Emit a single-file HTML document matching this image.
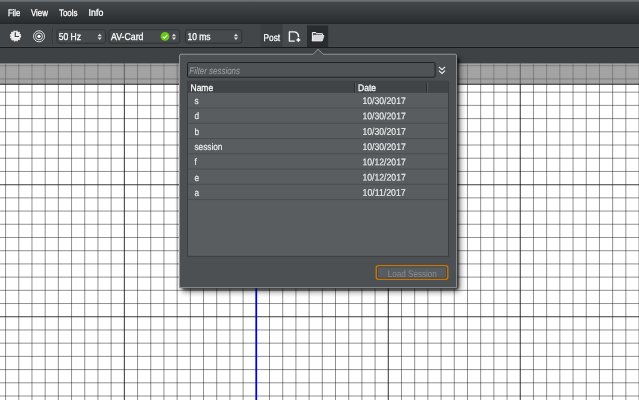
<!DOCTYPE html>
<html><head><meta charset="utf-8"><title>Sessions</title>
<style>
html,body{margin:0;padding:0;}
body{width:639px;height:400px;overflow:hidden;background:#fff;position:relative;font-family:"Liberation Sans",sans-serif;}
svg.bg{position:absolute;left:0;top:0;will-change:transform;opacity:0.999;font-family:"Liberation Sans",sans-serif;}
</style></head><body>
<svg class="bg" width="639" height="400" viewBox="0 0 639 400">
<defs><linearGradient id="mg" x1="0" y1="0" x2="0" y2="1"><stop offset="0" stop-color="#707376"/><stop offset="0.05" stop-color="#686b6e"/><stop offset="0.1" stop-color="#43474a"/><stop offset="0.5" stop-color="#383b3e"/><stop offset="0.93" stop-color="#2b2e31"/><stop offset="1" stop-color="#222528"/></linearGradient><filter id="sh" x="-10%" y="-10%" width="125%" height="125%"><feGaussianBlur stdDeviation="3.4"/></filter><filter id="sh2" x="-10%" y="-10%" width="125%" height="125%"><feGaussianBlur stdDeviation="1.1"/></filter></defs>
<rect x="0" y="63.6" width="639" height="336.4" fill="#ffffff"/>
<path d="M5.58 63.6V400M18.77 63.6V400M31.97 63.6V400M45.17 63.6V400M58.36 63.6V400M71.56 63.6V400M84.76 63.6V400M97.96 63.6V400M111.15 63.6V400M137.55 63.6V400M150.74 63.6V400M163.94 63.6V400M177.14 63.6V400M190.33 63.6V400M203.53 63.6V400M216.73 63.6V400M229.93 63.6V400M243.12 63.6V400M269.52 63.6V400M282.71 63.6V400M295.91 63.6V400M309.11 63.6V400M322.30 63.6V400M335.50 63.6V400M348.70 63.6V400M361.90 63.6V400M375.09 63.6V400M401.49 63.6V400M414.68 63.6V400M427.88 63.6V400M441.08 63.6V400M454.27 63.6V400M467.47 63.6V400M480.67 63.6V400M493.87 63.6V400M507.06 63.6V400M533.46 63.6V400M546.65 63.6V400M559.85 63.6V400M573.05 63.6V400M586.25 63.6V400M599.44 63.6V400M612.64 63.6V400M625.84 63.6V400M639.03 63.6V400" stroke="#000" stroke-opacity="0.51" stroke-width="0.85" fill="none"/>
<path d="M0 65.76H639M0 78.97H639M0 92.18H639M0 105.39H639M0 118.60H639M0 131.81H639M0 145.02H639M0 158.23H639M0 171.44H639M0 197.86H639M0 211.07H639M0 224.28H639M0 237.49H639M0 250.70H639M0 263.91H639M0 277.12H639M0 290.33H639M0 303.54H639M0 329.96H639M0 343.17H639M0 356.38H639M0 369.59H639M0 382.80H639M0 396.01H639" stroke="#000" stroke-opacity="0.51" stroke-width="0.85" fill="none"/>
<path d="M124.35 63.6V400M256.32 63.6V400M388.29 63.6V400M520.26 63.6V400" stroke="#000" stroke-opacity="0.76" stroke-width="1.05" fill="none"/>
<path d="M0 184.65H639M0 316.75H639" stroke="#000" stroke-opacity="0.76" stroke-width="1.05" fill="none"/>
<rect x="0" y="63.6" width="639" height="20.4" fill="#747474" fill-opacity="0.66"/>
<path d="M0 84.15H639" stroke="#161616" stroke-opacity="0.95" stroke-width="1.05" fill="none"/>
<path d="M256.3 184V400" stroke="#0000e6" stroke-width="1.7" fill="none"/>
<rect x="0" y="0" width="639" height="63.6" fill="#3e4245"/>
<rect x="0" y="0" width="639" height="47.2" fill="#424649"/>
<rect x="0" y="45.6" width="639" height="1.5" fill="#484c4f"/>
<rect x="0" y="46.95" width="639" height="1" fill="#17191b"/>
<rect x="0" y="0" width="639" height="24" fill="url(#mg)"/>
<path d="M52.6 28.5Q51.6 36 52.6 44" stroke="#313437" stroke-width="1" fill="none"/><path d="M53.5 28.5Q52.5 36 53.5 44" stroke="#484c4f" stroke-width="0.8" fill="none"/>
<circle cx="15.5" cy="36" r="4.9" fill="#ececec"/><circle cx="15.5" cy="36" r="5.1" fill="none" stroke="#ececec" stroke-width="1.1" stroke-dasharray="1.55 1.12"/>
<path d="M15.3 32.2V36.5H19" stroke="#424649" stroke-width="1.2" fill="none"/>
<circle cx="39" cy="36.3" r="5.5" fill="none" stroke="#ededed" stroke-width="0.9"/><circle cx="39" cy="36.3" r="3.5" fill="none" stroke="#ededed" stroke-width="0.9"/><circle cx="39" cy="36.3" r="1.6" fill="#ffffff"/>
<rect x="56.95" y="29.8" width="48.6" height="13.3" rx="2.2" fill="#464a4d" stroke="#2f3235" stroke-width="1"/><path d="M99.7 33.8L101.8 36.2H97.60000000000001Z M99.7 39.9L101.8 37.4H97.60000000000001Z" fill="#e2e2e2"/>
<rect x="108.95" y="29.8" width="70.85" height="13.3" rx="2.2" fill="#464a4d" stroke="#2f3235" stroke-width="1"/><path d="M173.95 33.8L176.04999999999998 36.2H171.85Z M173.95 39.9L176.04999999999998 37.4H171.85Z" fill="#e2e2e2"/>
<rect x="185.45" y="29.8" width="56.35" height="13.3" rx="2.2" fill="#464a4d" stroke="#2f3235" stroke-width="1"/><path d="M235.95 33.8L238.04999999999998 36.2H233.85Z M235.95 39.9L238.04999999999998 37.4H233.85Z" fill="#e2e2e2"/>
<circle cx="165" cy="36.45" r="4.4" fill="#64c814"/><path d="M162.7 36.6L164.4 38.2L167.4 34.8" stroke="#eef4e8" stroke-width="1.05" fill="none"/>
<rect x="260.5" y="24" width="22.2" height="22.95" fill="#3b3f42"/>
<rect x="282.7" y="24" width="24.3" height="22.95" fill="#464a4d"/>
<rect x="307" y="25.5" width="21.2" height="21.45" fill="#292c2f"/>
<path d="M294.8 41.1H289.4V31.9H294.3Q298.5 32.4 298.5 36.6V37.3" stroke="#f8f8f8" stroke-width="1.4" fill="none" stroke-linejoin="round"/><path d="M298.35 38V41.8M296.45 39.9H300.25" stroke="#fff" stroke-width="1.5" fill="none"/>
<path d="M312.4 40.6V32.5H315.8L316.6 33.7H322.4V35.2" stroke="#f4f4f4" stroke-width="1" fill="#f4f4f4" fill-opacity="0.25"/><path d="M312 41L313.6 35.5H324L322.2 41Z" fill="#d6d6d6" stroke="#f6f6f6" stroke-width="0.7"/>
<rect x="182" y="58" width="277.5" height="233" rx="2" fill="#000" fill-opacity="0.62" filter="url(#sh)"/>
<rect x="182" y="57" width="276.6" height="232.6" rx="2" fill="#000" fill-opacity="0.75" filter="url(#sh2)"/>
<path d="M179.5 56V287.7H456.6V55.8Q456.6 54.2 455 54.2H323L318.1 49.2L313.2 54.2H181Q179.5 54.2 179.5 56Z" fill="#4c5053" stroke="#93969a" stroke-width="1"/>
<rect x="187.5" y="62.5" width="247.6" height="14.7" rx="1.2" fill="#4f5356" stroke="#202325" stroke-width="1"/>
<path d="M438.9 66.8L442 69.7L445.1 66.8M438.9 70.6L442 73.5L445.1 70.6" stroke="#f0f0f0" stroke-width="1.1" fill="none"/>
<rect x="187.5" y="81.3" width="261" height="175" fill="#595d60" stroke="#3b3e41" stroke-width="1"/>
<rect x="188" y="81.8" width="260" height="11" fill="#404447"/>
<path d="M355.6 83V92.5M427.6 83V92.5" stroke="#5d6164" stroke-width="1"/><path d="M354.6 83V92.5M426.6 83V92.5" stroke="#2c2f32" stroke-width="1"/>
<path d="M188 108.05H448" stroke="#4a4e51" stroke-width="1"/>
<path d="M188 123.30H448" stroke="#4a4e51" stroke-width="1"/>
<path d="M188 138.55H448" stroke="#4a4e51" stroke-width="1"/>
<path d="M188 153.80H448" stroke="#4a4e51" stroke-width="1"/>
<path d="M188 169.05H448" stroke="#4a4e51" stroke-width="1"/>
<path d="M188 184.30H448" stroke="#4a4e51" stroke-width="1"/>
<path d="M188 199.55H448" stroke="#4a4e51" stroke-width="1"/>
<rect x="376.3" y="265.65" width="71.45" height="13.7" rx="2.4" fill="#595d60" stroke="#c67503" stroke-width="1.5"/><rect x="377.5" y="266.85" width="69.05" height="11.3" rx="1.3" fill="none" stroke="#3d434a" stroke-width="0.9"/>
<text transform="translate(7.90 15.85) rotate(0.03) scale(0.7970 1)" font-size="9.5" fill="#ffffff" stroke="#ffffff" stroke-width="0.3">File</text>
<text transform="translate(31.00 15.85) rotate(0.03) scale(0.8276 1)" font-size="9.5" fill="#ffffff" stroke="#ffffff" stroke-width="0.3">View</text>
<text transform="translate(59.00 15.85) rotate(0.03) scale(0.8342 1)" font-size="9.5" fill="#ffffff" stroke="#ffffff" stroke-width="0.3">Tools</text>
<text transform="translate(88.60 15.85) rotate(0.03) scale(0.9277 1)" font-size="9.5" fill="#ffffff" stroke="#ffffff" stroke-width="0.3">Info</text>
<text transform="translate(58.70 39.90) rotate(0.03) scale(0.8536 1)" font-size="10" fill="#fafafa" stroke="#fafafa" stroke-width="0.3">50 Hz</text>
<text transform="translate(111.00 39.90) rotate(0.03) scale(0.8772 1)" font-size="10" fill="#fafafa" stroke="#fafafa" stroke-width="0.3">AV-Card</text>
<text transform="translate(187.50 39.90) rotate(0.03) scale(0.8483 1)" font-size="10" fill="#fafafa" stroke="#fafafa" stroke-width="0.3">10 ms</text>
<text transform="translate(263.50 40.80) rotate(0.03) scale(0.8380 1)" font-size="9.9" fill="#fafafa" stroke="#fafafa" stroke-width="0.3">Post</text>
<text transform="translate(189.30 73.70) rotate(0.03) scale(0.8264 1)" font-size="9.6" fill="#999da0" stroke="#999da0" stroke-width="0.1" font-style="italic">Filter sessions</text>
<text transform="translate(190.50 91.00) rotate(0.03) scale(0.8864 1)" font-size="9.6" fill="#f8f8f8" stroke="#f8f8f8" stroke-width="0.3">Name</text>
<text transform="translate(358.00 91.00) rotate(0.03) scale(0.8877 1)" font-size="9.6" fill="#f8f8f8" stroke="#f8f8f8" stroke-width="0.3">Date</text>
<text transform="translate(194.50 104.05) rotate(0.03) scale(0.8600 1)" font-size="9.6" fill="#f0f0f0" stroke="#f0f0f0" stroke-width="0.15">s</text>
<text transform="translate(362.50 104.05) rotate(0.03) scale(0.9012 1)" font-size="9.6" fill="#f0f0f0" stroke="#f0f0f0" stroke-width="0.15">10/30/2017</text>
<text transform="translate(194.50 119.35) rotate(0.03) scale(0.8600 1)" font-size="9.6" fill="#f0f0f0" stroke="#f0f0f0" stroke-width="0.15">d</text>
<text transform="translate(362.50 119.35) rotate(0.03) scale(0.9012 1)" font-size="9.6" fill="#f0f0f0" stroke="#f0f0f0" stroke-width="0.15">10/30/2017</text>
<text transform="translate(194.50 134.65) rotate(0.03) scale(0.8600 1)" font-size="9.6" fill="#f0f0f0" stroke="#f0f0f0" stroke-width="0.15">b</text>
<text transform="translate(362.50 134.65) rotate(0.03) scale(0.9012 1)" font-size="9.6" fill="#f0f0f0" stroke="#f0f0f0" stroke-width="0.15">10/30/2017</text>
<text transform="translate(194.50 149.95) rotate(0.03) scale(0.8600 1)" font-size="9.6" fill="#f0f0f0" stroke="#f0f0f0" stroke-width="0.15">session</text>
<text transform="translate(362.50 149.95) rotate(0.03) scale(0.9012 1)" font-size="9.6" fill="#f0f0f0" stroke="#f0f0f0" stroke-width="0.15">10/30/2017</text>
<text transform="translate(194.50 165.25) rotate(0.03) scale(0.8600 1)" font-size="9.6" fill="#f0f0f0" stroke="#f0f0f0" stroke-width="0.15">f</text>
<text transform="translate(362.50 165.25) rotate(0.03) scale(0.9012 1)" font-size="9.6" fill="#f0f0f0" stroke="#f0f0f0" stroke-width="0.15">10/12/2017</text>
<text transform="translate(194.50 180.55) rotate(0.03) scale(0.8600 1)" font-size="9.6" fill="#f0f0f0" stroke="#f0f0f0" stroke-width="0.15">e</text>
<text transform="translate(362.50 180.55) rotate(0.03) scale(0.9012 1)" font-size="9.6" fill="#f0f0f0" stroke="#f0f0f0" stroke-width="0.15">10/12/2017</text>
<text transform="translate(194.50 195.85) rotate(0.03) scale(0.8600 1)" font-size="9.6" fill="#f0f0f0" stroke="#f0f0f0" stroke-width="0.15">a</text>
<text transform="translate(362.50 195.85) rotate(0.03) scale(0.9148 1)" font-size="9.6" fill="#f0f0f0" stroke="#f0f0f0" stroke-width="0.15">10/11/2017</text>
<text transform="translate(387.70 276.50) rotate(0.03) scale(0.8474 1)" font-size="9.6" fill="#878b8e" stroke="#878b8e" stroke-width="0.05">Load Session</text>
</svg>
</body></html>
